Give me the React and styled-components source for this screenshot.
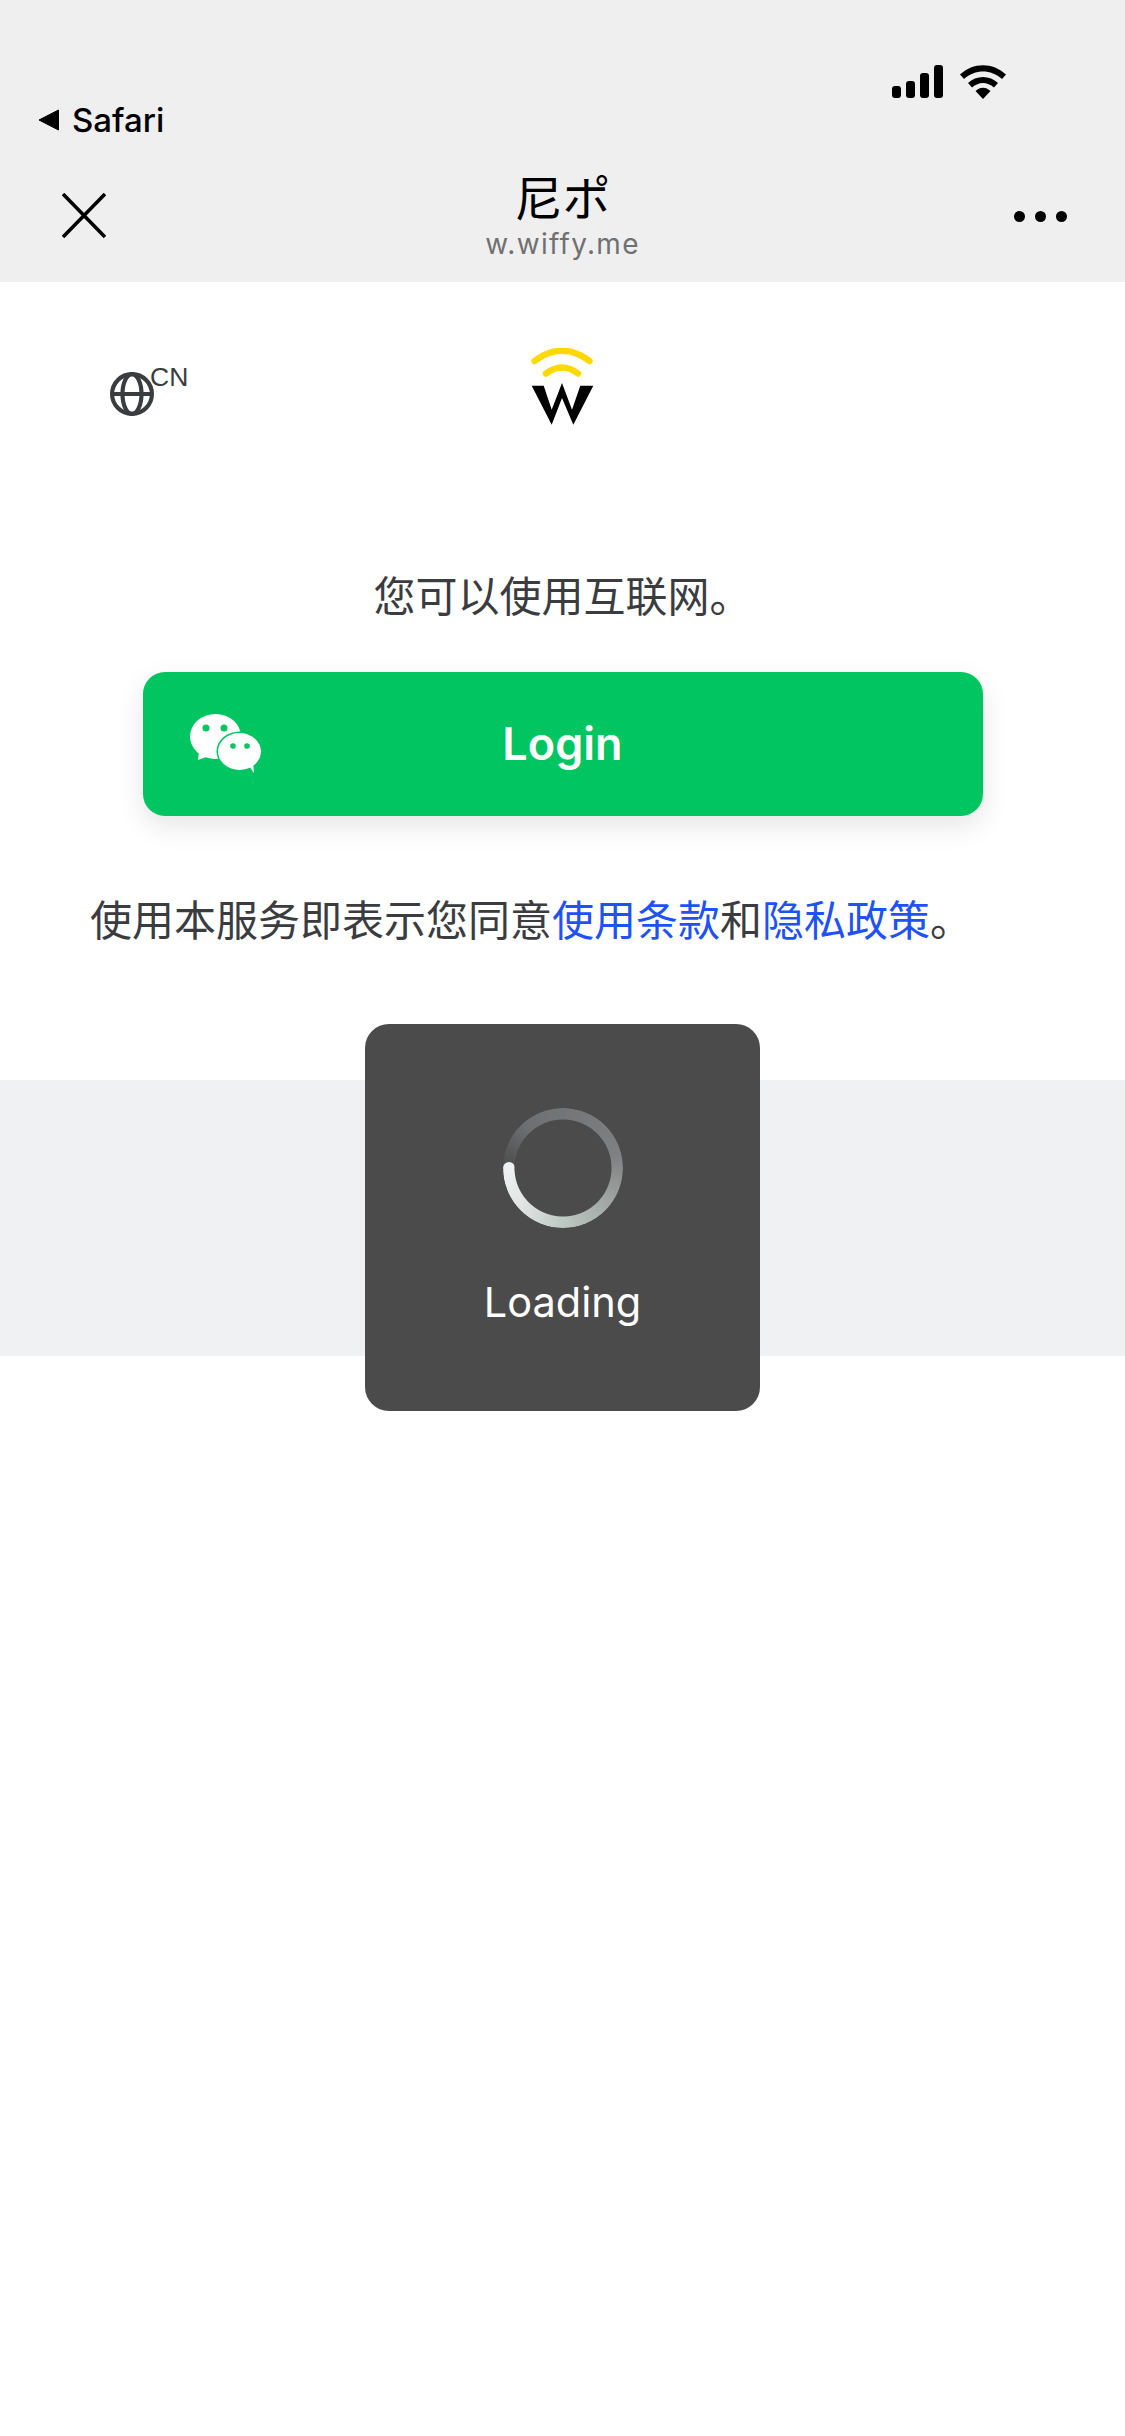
import React from "react";
import styled, { createGlobalStyle } from "styled-components";

const Global = createGlobalStyle`
  html, body { margin: 0; padding: 0; background: #fff; }
  body { font-family: Inter, "Noto Sans CJK SC", sans-serif; }
  * { box-sizing: border-box; }
`;
const Page = styled.div`
  position: relative;
  width: 1125px;
  height: 2436px;
  background: #fff;
  overflow: hidden;
`;
const Header = styled.header`
  height: 282px;
  background: #efeff0;
  display: flex;
  flex-direction: column;
`;
const StatusBar = styled.div`
  height: 104px;
  padding: 65px 119px 0 0;
  display: flex;
  justify-content: flex-end;
  gap: 16px;
  align-items: flex-start;
`;
const BackRow = styled.div`
  height: 32px;
  padding-left: 38px;
  display: flex;
  align-items: center;
  gap: 13px;
  font-size: 33px;
  font-weight: 500;
  color: #000;
`;
const NavBar = styled.div`
  flex: 1;
  display: grid;
  grid-template-columns: 1fr auto 1fr;
  align-items: start;
  padding: 30px 58px 0 58px;
`;
const CloseIcon = styled.svg`
  width: 44px;
  height: 45px;
  margin: 27px 0 0 4px;
`;
const TitleBlock = styled.div`
  display: flex;
  flex-direction: column;
  align-items: center;
`;
const Title = styled.div`
  font-size: 48px;
  line-height: 58px;
  color: #000;
  font-family: "Noto Sans CJK JP", sans-serif;
`;
const Subtitle = styled.div`
  margin-top: 2px;
  font-size: 28px;
  line-height: 36px;
  color: #707070;
  letter-spacing: 1.3px;
`;
const Dots = styled.div`
  justify-self: end;
  display: flex;
  gap: 10px;
  margin-top: 45px;
`;
const Dot = styled.span`
  width: 11px;
  height: 11px;
  border-radius: 50%;
  background: #000;
`;
const Main = styled.main`
  height: 798px;
  display: flex;
  flex-direction: column;
`;
const TopRow = styled.div`
  height: 150px;
  position: relative;
  display: flex;
  justify-content: center;
  padding-top: 66px;
`;
const Lang = styled.div`
  position: absolute;
  left: 110px;
  top: 90px;
  display: flex;
  align-items: flex-start;
`;
const LangText = styled.span`
  font-family: "Liberation Sans", sans-serif;
  font-size: 26.500px;
  line-height: 26px;
  color: #3a3c40;
  margin: -8px 0 0 -4px;
`;
const Notice = styled.p`
  margin: 141px 0 0;
  font-size: 42px;
  line-height: 48px;
  text-align: center;
  color: #3a3c40;
`;
const LoginButton = styled.button`
  position: relative;
  align-self: center;
  margin: 51px 0 0;
  padding: 0 0 2px;
  width: 840px;
  height: 144px;
  border: 0;
  border-radius: 22px;
  background: #00c560;
  color: #fff;
  font-family: Inter, sans-serif;
  font-size: 45px;
  font-weight: 600;
  box-shadow: 0 10px 28px rgba(0, 0, 0, 0.1);
`;
const WeChat = styled.svg`
  position: absolute;
  left: 47px;
  top: 42px;
  width: 72px;
  height: 60px;
`;
const Terms = styled.p`
  margin: 81px 0 0;
  padding-left: 90px;
  font-size: 42px;
  line-height: 48px;
  color: #3a3c40;
  white-space: nowrap;
`;
const TermLink = styled.span`
  color: #1f52f5;
`;
const Band = styled.div`
  height: 276px;
  background: #f0f1f3;
`;
const Toast = styled.div`
  position: absolute;
  left: 365px;
  top: 1024px;
  width: 395px;
  height: 387px;
  border-radius: 24px;
  background: #4b4b4b;
  display: flex;
  flex-direction: column;
  align-items: center;
  padding-top: 84px;
`;
const Spinner = styled.div`
  position: relative;
  width: 120px;
  height: 120px;
  border-radius: 50%;
  background: conic-gradient(
    from 268deg,
    rgba(110, 112, 114, 0) 0deg,
    #6e6f71 50deg,
    #747678 100deg,
    #808182 170deg,
    #a0a3a2 215deg,
    #bcc8c2 270deg,
    #e2e4e4 320deg,
    #eff0f1 360deg
  );
  -webkit-mask: radial-gradient(circle, transparent 48px, #000 49px);
  mask: radial-gradient(circle, transparent 48px, #000 49px);
  &::after {
    content: "";
    position: absolute;
    left: 0;
    top: 54px;
    width: 12px;
    height: 12px;
    border-radius: 50%;
    background: #eff0f1;
  }
`;
const ToastLabel = styled.div`
  margin-top: 49px;
  font-size: 41.500px;
  line-height: 50px;
  color: #fff;
`;

export default function App() {
  return (
    <Page>
      <Global />
      <Header>
        <StatusBar>
          <svg width="52" height="33" viewBox="0 0 52 33" aria-hidden="true">
            <rect x="0" y="21" width="9" height="12" rx="3" fill="#000" />
            <rect x="14" y="16" width="9" height="17" rx="3" fill="#000" />
            <rect x="28" y="8" width="9" height="25" rx="3" fill="#000" />
            <rect x="42" y="0" width="9" height="33" rx="3" fill="#000" />
          </svg>
          <svg width="46" height="34" viewBox="0 0 46 34" aria-hidden="true">
            <path d="M0 9.500C13 -3 33 -3 46 9.500L42 14C31 4 15 4 4 14Z" fill="#000" />
            <path d="M8 18C16 10 30 10 38 18L34 22.500C27 16.500 19 16.500 12 22.500Z" fill="#000" />
            <path d="M15.500 26C20 21.500 26 21.500 30.500 26L23 34Z" fill="#000" />
          </svg>
        </StatusBar>
        <BackRow>
          <svg width="21" height="22" viewBox="0 0 21 22" aria-hidden="true">
            <path d="M20.500 1V21L1 11Z" fill="#000" stroke="#000" strokeLinejoin="round" />
          </svg>
          Safari
        </BackRow>
        <NavBar>
          <CloseIcon viewBox="0 0 44 45" aria-hidden="true">
            <path d="M1 1L43 44M43 1L1 44" stroke="#000" strokeWidth="3.600" fill="none" />
          </CloseIcon>
          <TitleBlock>
            <Title>尼ポ</Title>
            <Subtitle>w.wiffy.me</Subtitle>
          </TitleBlock>
          <Dots>
            <Dot />
            <Dot />
            <Dot />
          </Dots>
        </NavBar>
      </Header>
      <Main>
        <TopRow>
          <Lang>
            <svg width="44" height="44" viewBox="0 0 44 44" aria-hidden="true" fill="none" stroke="#3a3c40" strokeWidth="4.200">
              <circle cx="22" cy="22" r="19.900" />
              <ellipse cx="22" cy="22" rx="9.500" ry="19.900" />
              <path d="M2 22H42" />
            </svg>
            <LangText>CN</LangText>
          </Lang>
          <svg width="63" height="77" viewBox="0 0 63 77" aria-hidden="true">
            <path d="M3.500 13Q31 -7.400 58.500 13" stroke="#ffd800" strokeWidth="6.400" fill="none" strokeLinecap="round" />
            <path d="M15 25.500Q31 13.500 47 25.500" stroke="#ffd800" strokeWidth="6.400" fill="none" strokeLinecap="round" />
            <path d="M0.700 37.700H12.700L20.700 61.700L31 35L41 61.700L49.300 37.700H62.300L42.300 76.700L31 50L20.700 76.700Z" fill="#000" />
          </svg>
        </TopRow>
        <Notice>您可以使用互联网。</Notice>
        <LoginButton>
          <WeChat viewBox="0 0 72 60" aria-hidden="true">
            <ellipse cx="25.500" cy="22.500" rx="25.500" ry="22.500" fill="#fff" />
            <path d="M9 38L8 46L19 42Z" fill="#fff" />
            <ellipse cx="49.500" cy="37.500" rx="23" ry="20" fill="#00c560" />
            <ellipse cx="49.500" cy="37.500" rx="21.500" ry="18.500" fill="#fff" />
            <path d="M59 52L64 59L63 48Z" fill="#fff" />
            <circle cx="16" cy="14" r="3.500" fill="#00c560" />
            <circle cx="34" cy="14" r="3.500" fill="#00c560" />
            <circle cx="43" cy="32" r="2.800" fill="#00c560" />
            <circle cx="57" cy="32" r="2.800" fill="#00c560" />
          </WeChat>
          Login
        </LoginButton>
        <Terms>
          使用本服务即表示您同意<TermLink>使用条款</TermLink>和<TermLink>隐私政策</TermLink>。
        </Terms>
      </Main>
      <Band />
      <Toast>
        <Spinner />
        <ToastLabel>Loading</ToastLabel>
      </Toast>
    </Page>
  );
}
